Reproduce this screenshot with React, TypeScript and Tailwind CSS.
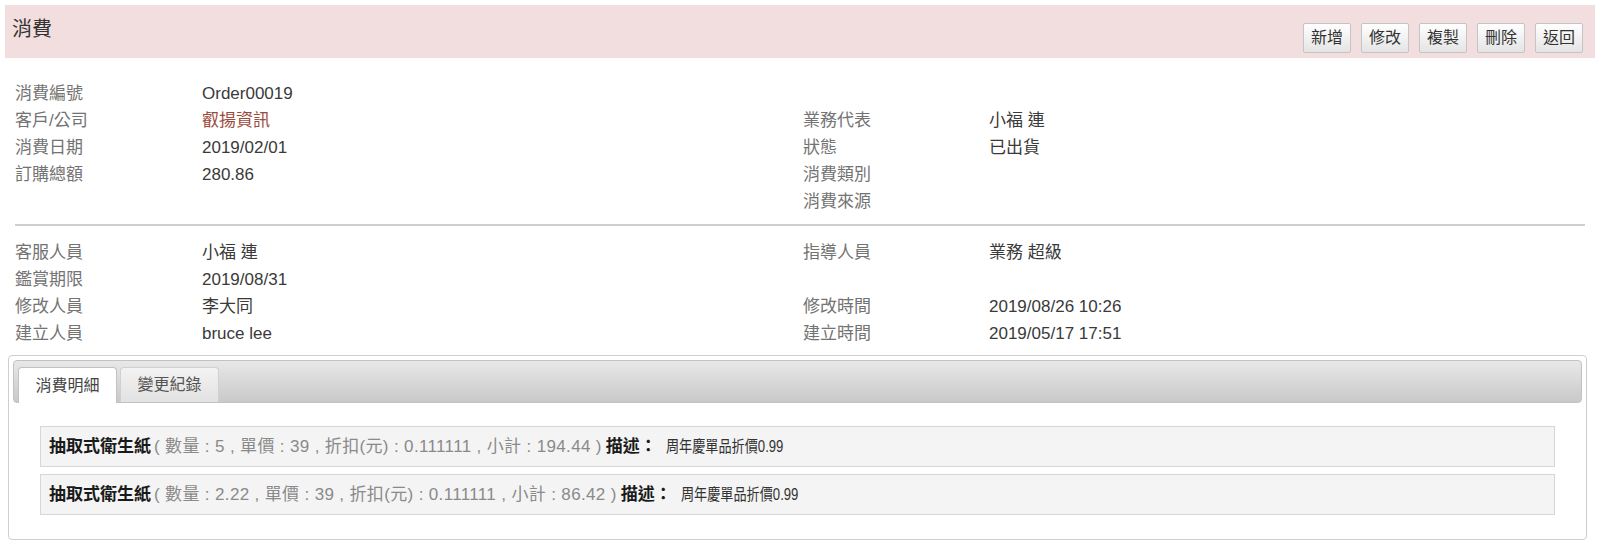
import React from 'react';

const font = "font-['Liberation_Sans','Noto_Sans_CJK_TC',sans-serif]";

type Row = [string, React.ReactNode, string, React.ReactNode];

const topRows: Row[] = [
  ['消費編號', 'Order00019', '', ''],
  ['客戶/公司', <span className="text-[#9c4a3c]">叡揚資訊</span>, '業務代表', '小福 連'],
  ['消費日期', '2019/02/01', '狀態', '已出貨'],
  ['訂購總額', '280.86', '消費類別', ''],
  ['', '', '消費來源', ''],
];

const bottomRows: Row[] = [
  ['客服人員', '小福 連', '指導人員', '業務 超級'],
  ['鑑賞期限', '2019/08/31', '', ''],
  ['修改人員', '李大同', '修改時間', '2019/08/26 10:26'],
  ['建立人員', 'bruce lee', '建立時間', '2019/05/17 17:51'],
];

const items = [
  { name: '抽取式衛生紙', qty: '5', price: '39', discount: '0.111111', subtotal: '194.44', desc: '周年慶單品折價0.99' },
  { name: '抽取式衛生紙', qty: '2.22', price: '39', discount: '0.111111', subtotal: '86.42', desc: '周年慶單品折價0.99' },
];

const buttons = ['新增', '修改', '複製', '刪除', '返回'];

function InfoRows({ rows }: { rows: Row[] }) {
  return (
    <div className="px-[15px]">
      {rows.map((r, i) => (
        <div key={i} className="grid grid-cols-[187px_601px_186px_1fr] h-[27px] items-center text-[17px]">
          <div className="text-[#737373]">{r[0]}</div>
          <div className="text-[#3a3a3a]">{r[1]}</div>
          <div className="text-[#737373]">{r[2]}</div>
          <div className="text-[#3a3a3a]">{r[3]}</div>
        </div>
      ))}
    </div>
  );
}

export default function App() {
  return (
    <div className={`${font} bg-white w-[1600px] h-[547px] p-[5px] overflow-hidden`}>
      {/* Header */}
      <div className="bg-[#f2dede] h-[53px] flex justify-between pl-[7px] pr-[12px]">
        <h1 className="text-[20px] text-[#333] pt-[11px] leading-[26px]">消費</h1>
        <div className="flex items-end gap-[10px] pb-[5px]">
          {buttons.map((b) => (
            <button
              key={b}
              className="w-[48px] h-[30px] border border-[#c4c4c4] rounded-[2px] bg-gradient-to-b from-white to-[#e4e4e4] text-[16px] text-[#333] leading-none"
            >
              {b}
            </button>
          ))}
        </div>
      </div>

      {/* Info */}
      <div className="mt-[22px] -mx-[5px]">
        <InfoRows rows={topRows} />
        <div className="mx-[15px] mt-[9px] mb-[13px] h-[2px] bg-[#cfcfcf]" />
        <InfoRows rows={bottomRows} />
      </div>

      {/* Tabs panel */}
      <div className="mt-[8px] ml-[3px] w-[1579px] h-[185px] border border-[#cfcfcf] rounded-[4px] p-[4px]">
        <div className="h-[43px] rounded-[4px] border border-[#c2c2c2] bg-gradient-to-b from-[#e8e8e8] to-[#c9c9c9] flex items-end px-[4px] gap-[3px]">
          <div className="w-[99px] h-[36px] -mb-px bg-white border border-[#c2c2c2] border-b-0 rounded-t-[4px] flex items-center justify-center text-[16px] text-[#444]">
            消費明細
          </div>
          <div className="w-[99px] h-[35px] bg-gradient-to-b from-[#f3f3f3] to-[#e2e2e2] border border-[#d0d0d0] border-b-0 rounded-t-[4px] flex items-center justify-center text-[16px] text-[#555]">
            變更紀錄
          </div>
        </div>
        <div className="pt-[23px] px-[27px] flex flex-col gap-[7px]">
          {items.map((it, i) => (
            <div key={i} className="h-[41px] bg-[#f4f4f4] border border-[#d6d6d6] flex items-center px-[8px] whitespace-nowrap">
              <span className="font-bold text-[17px] text-[#1a1a1a]">{it.name}</span>
              <span className="text-[#8a8a8a] text-[17px] tracking-[0.35px] ml-[3px]">
                ( 數量 : {it.qty} , 單價 : {it.price} , 折扣(元) : {it.discount} , 小計 : {it.subtotal} )
              </span>
              <span className="font-bold text-[17px] text-[#1a1a1a] ml-[4px]">描述：</span>
              <span className="inline-block ml-[9px] text-[#333] text-[16px] origin-left scale-x-[0.82] -mr-[26px]">{it.desc}</span>
            </div>
          ))}
        </div>
      </div>
    </div>
  );
}
